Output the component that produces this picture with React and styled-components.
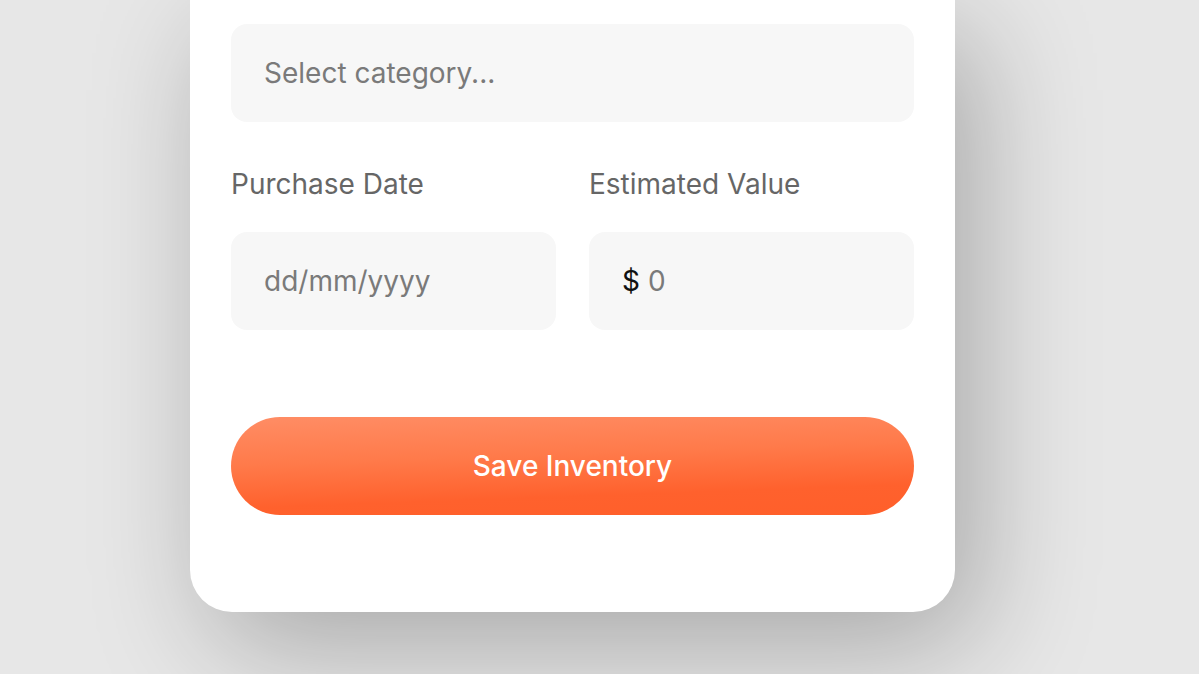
import React from 'react'
import styled, { createGlobalStyle } from 'styled-components'

const GlobalStyle = createGlobalStyle`
  html, body {
    margin: 0;
    padding: 0;
    background: #e7e7e7;
    font-family: Inter, "Noto Sans", sans-serif;
    overflow: hidden;
  }
`

const Page = styled.div`
  width: 1199px;
  height: 674px;
  padding-left: 190px;
  box-sizing: border-box;
`

const Card = styled.div`
  width: 765px;
  box-sizing: border-box;
  background: #ffffff;
  border-radius: 0 0 42px 42px;
  padding: 24px 41px 97px 41px;
  box-shadow: 22px 34px 120px rgba(0, 0, 0, 0.28);
  display: flex;
  flex-direction: column;
`

const Field = styled.div`
  height: 98px;
  border-radius: 16px;
  background: #f7f7f7;
  display: flex;
  align-items: center;
  padding: 0 33px;
  font-size: 28px;
  color: #7a7a7a;
  box-sizing: border-box;
`

const Row = styled.div`
  display: grid;
  grid-template-columns: 1fr 1fr;
  column-gap: 33px;
  margin-top: 45px;
`

const Group = styled.div`
  display: flex;
  flex-direction: column;
  gap: 31px;
`

const Label = styled.div`
  font-size: 28px;
  color: #666666;
  line-height: 34px;
`

const Currency = styled.span`
  color: #111111;
  margin-right: 8px;
`

const Button = styled.button`
  margin-top: 87px;
  height: 98px;
  border: none;
  border-radius: 49px;
  background: linear-gradient(178deg, #ff8d65 0%, #ff7a4a 40%, #ff612d 75%, #ff5f2a 100%);
  color: #ffffff;
  font-family: Inter, "Noto Sans", sans-serif;
  font-size: 28px;
  font-weight: 500;
`

export default function App() {
  return (
    <>
      <GlobalStyle />
      <Page>
        <Card>
          <Field>Select category...</Field>
          <Row>
            <Group>
              <Label>Purchase Date</Label>
              <Field>dd/mm/yyyy</Field>
            </Group>
            <Group>
              <Label>Estimated Value</Label>
              <Field>
                <Currency>$</Currency>0
              </Field>
            </Group>
          </Row>
          <Button>Save Inventory</Button>
        </Card>
      </Page>
    </>
  )
}
